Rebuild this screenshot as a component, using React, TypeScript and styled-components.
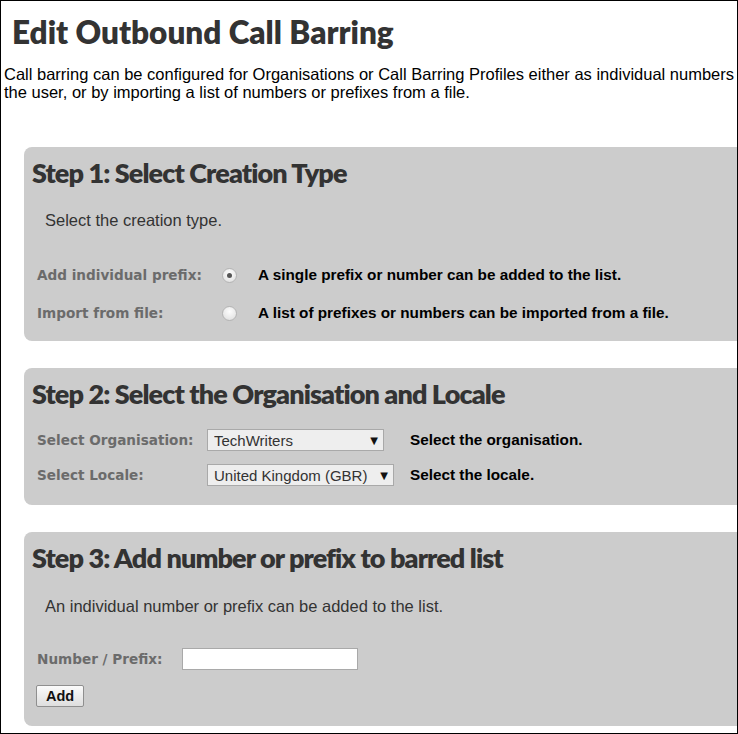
import styled, { createGlobalStyle } from "styled-components"

const GlobalStyle = createGlobalStyle`
  html, body {
    margin: 0;
    padding: 0;
    background: #ffffff;
  }
`

const Frame = styled.div`
  width: 738px;
  height: 734px;
  box-sizing: border-box;
  border: 1px solid #000000;
  overflow: hidden;
  background: #ffffff;
`

const Page = styled.div`
  width: 900px;
`

const Title = styled.h1`
  margin: 13px 0 0 11px;
  font-family: Lato, "Liberation Sans", sans-serif;
  font-weight: 800;
  font-size: 31.5px;
  line-height: 36px;
  color: #333333;
`

const Intro = styled.p`
  margin: 15px 0 46px 3px;
  font-family: "Liberation Sans", Arial, sans-serif;
  font-size: 16.5px;
  line-height: 18px;
  color: #000000;
`

const Panel = styled.section<{ $bottom: number }>`
  margin: 0 0 27px 23px;
  padding: 12px 0 ${(p) => p.$bottom}px 12px;
  background: #cccccc;
  border-radius: 8px 0 0 8px;
`

const StepHeading = styled.h2`
  margin: 0 0 0 -4px;
  font-family: Lato, "Liberation Sans", sans-serif;
  font-weight: 800;
  font-size: 27px;
  line-height: 28px;
  letter-spacing: -0.9px;
  color: #333333;
`

const StepText = styled.p<{ $top: number }>`
  margin: ${(p) => p.$top}px 0 0 9px;
  font-family: "Liberation Sans", Arial, sans-serif;
  font-size: 16.5px;
  line-height: 18px;
  color: #333333;
`

const FieldGrid = styled.div<{ $top: number; $label: number; $gap: number }>`
  display: grid;
  grid-template-columns: ${(p) => p.$label}px auto 1fr;
  grid-auto-rows: 22px;
  row-gap: ${(p) => p.$gap}px;
  align-items: center;
  margin: ${(p) => p.$top}px 0 0 1px;
`

const FieldLabel = styled.label`
  font-family: "DejaVu Sans", Verdana, sans-serif;
  font-weight: 700;
  font-size: 13.6px;
  color: #6b6b6b;
  white-space: nowrap;
`

const Hint = styled.span<{ $indent: number }>`
  margin-left: ${(p) => p.$indent}px;
  font-family: "Liberation Sans", Arial, sans-serif;
  font-weight: 700;
  font-size: 15.3px;
  color: #000000;
  white-space: nowrap;
`

const Radio = styled.input`
  appearance: none;
  margin: 0;
  width: 15px;
  height: 15px;
  border-radius: 50%;
  border: 1px solid #b4b4b4;
  box-sizing: border-box;
  background: radial-gradient(circle at 50% 35%, #fdfdfd 0%, #e6e6e6 70%, #d6d6d6 100%);
  display: grid;
  place-items: center;

  &:checked::after {
    content: "";
    width: 5px;
    height: 5px;
    border-radius: 50%;
    background: #555555;
  }
`

const SelectWrap = styled.div<{ $width: number }>`
  position: relative;
  width: ${(p) => p.$width}px;
  height: 22px;
`

const Select = styled.select`
  appearance: none;
  width: 100%;
  height: 100%;
  margin: 0;
  padding: 0 18px 0 6px;
  box-sizing: border-box;
  border: 1px solid #a9a9a9;
  border-radius: 0;
  background: #eeeeee;
  font-family: "Liberation Sans", Arial, sans-serif;
  font-size: 15px;
  color: #333333;
`

const Caret = styled.span`
  position: absolute;
  right: 6px;
  top: 50%;
  transform: translateY(-50%);
  font-family: "DejaVu Sans", sans-serif;
  font-size: 10px;
  color: #111111;
  pointer-events: none;
`

const TextInput = styled.input`
  width: 176px;
  height: 22px;
  margin: 0;
  box-sizing: border-box;
  border: 1px solid #a9a9a9;
  background: #ffffff;
`

const AddButton = styled.button`
  display: block;
  margin-top: 15px;
  width: 48px;
  height: 22px;
  padding: 0;
  box-sizing: border-box;
  border: 1px solid #8f8f8f;
  border-radius: 2px;
  background: linear-gradient(#fbfbfb, #dedede);
  font-family: "Liberation Sans", Arial, sans-serif;
  font-weight: 700;
  font-size: 14.5px;
  color: #111111;
`

type DropdownProps = { value: string; width: number }

const Dropdown = ({ value, width }: DropdownProps) => (
  <SelectWrap $width={width}>
    <Select defaultValue={value}>
      <option>{value}</option>
    </Select>
    <Caret>▼</Caret>
  </SelectWrap>
)

export default function App() {
  return (
    <>
      <GlobalStyle />
      <Frame>
        <Page>
          <Title>Edit Outbound Call Barring</Title>
          <Intro>
            Call barring can be configured for Organisations or Call Barring Profiles either as individual numbers entered by
            <br />
            the user, or by importing a list of numbers or prefixes from a file.
          </Intro>

          <Panel $bottom={17}>
            <StepHeading>Step 1: Select Creation Type</StepHeading>
            <StepText $top={24}>Select the creation type.</StepText>
            <FieldGrid $top={35} $label={185} $gap={16}>
              <FieldLabel>Add individual prefix:</FieldLabel>
              <Radio type="radio" name="creation" defaultChecked />
              <Hint $indent={21}>A single prefix or number can be added to the list.</Hint>
              <FieldLabel>Import from file:</FieldLabel>
              <Radio type="radio" name="creation" />
              <Hint $indent={21}>A list of prefixes or numbers can be imported from a file.</Hint>
            </FieldGrid>
          </Panel>

          <Panel $bottom={19}>
            <StepHeading>Step 2: Select the Organisation and Locale</StepHeading>
            <FieldGrid $top={21} $label={170} $gap={13}>
              <FieldLabel>Select Organisation:</FieldLabel>
              <Dropdown value="TechWriters" width={177} />
              <Hint $indent={16}>Select the organisation.</Hint>
              <FieldLabel>Select Locale:</FieldLabel>
              <Dropdown value="United Kingdom (GBR)" width={187} />
              <Hint $indent={16}>Select the locale.</Hint>
            </FieldGrid>
          </Panel>

          <Panel $bottom={19}>
            <StepHeading>Step 3: Add number or prefix to barred list</StepHeading>
            <StepText $top={25}>An individual number or prefix can be added to the list.</StepText>
            <FieldGrid $top={33} $label={145} $gap={0}>
              <FieldLabel>Number / Prefix:</FieldLabel>
              <TextInput type="text" />
            </FieldGrid>
            <AddButton type="button">Add</AddButton>
          </Panel>
        </Page>
      </Frame>
    </>
  )
}
